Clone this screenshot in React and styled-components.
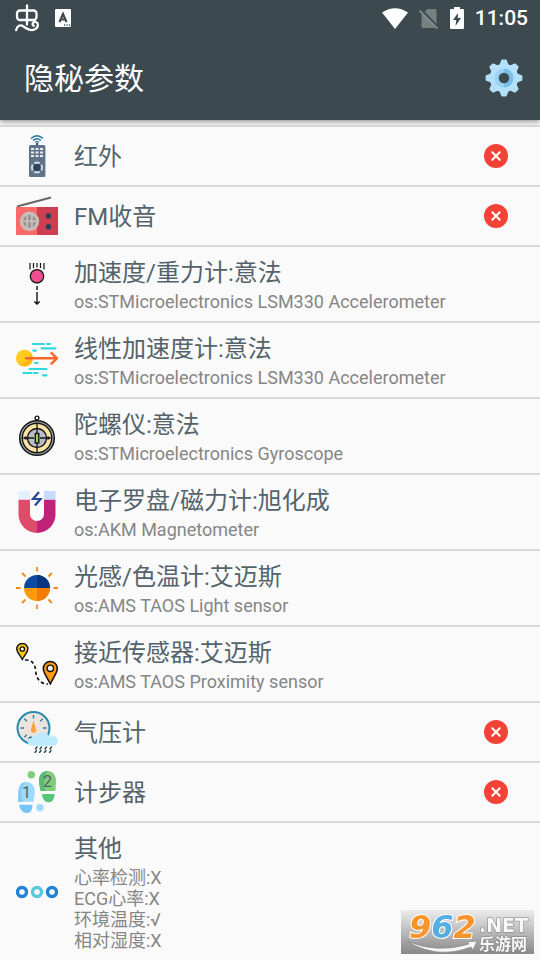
import React from "react";
import styled, { createGlobalStyle } from "styled-components";

const GlobalStyle = createGlobalStyle`
  * {
    box-sizing: border-box;
  }

  body {
    margin: 0;
    background-color: #fafafa;
    font-family: Roboto, "Noto Sans CJK SC", sans-serif;
  }
`;

const Header = styled.header`
  position: relative;
  background-color: #3c4a50;
  color: white;
  box-shadow: 0 2px 5px rgba(0, 0, 0, 0.4);
`;

const StatusBar = styled.div`
  display: flex;
  justify-content: space-between;
  align-items: center;
  height: 36px;
  padding: 0 12px 0 14px;
`;

const StatusGroup = styled.div`
  display: flex;
  align-items: center;
  gap: ${({ $gap }) => $gap}px;
`;

const Clock = styled.time`
  font-size: 21px;
  line-height: 24px;
  font-weight: 500;
`;

const Toolbar = styled.div`
  display: flex;
  justify-content: space-between;
  align-items: center;
  height: 84px;
  padding: 0 16px 0 24px;
`;

const PageTitle = styled.h1`
  margin: 0;
  padding-top: 2px;
  font-size: 30px;
  line-height: 40px;
  font-weight: 400;
`;

const SettingsButton = styled.button`
  display: flex;
  padding: 0;
  border: 0;
  background: none;
  cursor: pointer;
`;

const SensorList = styled.ul`
  margin: 5px 0 0;
  padding: 0;
  list-style: none;
  border-top: 2px solid #dadada;
`;

const SensorRow = styled.li`
  display: flex;
  align-items: center;
  gap: 16px;
  min-height: 60px;
  padding: 0 32px 0 16px;
  border-bottom: 2px solid #dadada;

  &:last-child {
    border-bottom: 0;
  }
`;

const SensorText = styled.div`
  flex: 1;
  padding: ${({ $single }) => ($single ? "2px 0 0" : "8px 0 9px")};
`;

const SensorName = styled.div`
  font-size: 24px;
  line-height: 36px;
  color: #53636b;
`;

const SensorDetail = styled.div`
  font-size: 18px;
  line-height: 21px;
  color: #868686;
`;

const Watermark = styled.div`
  position: fixed;
  right: 6px;
  bottom: 6px;
  display: flex;
`;

function Icon({ children, size = 42 }) {
  return (
    <svg width={size} height={size} viewBox="0 0 42 42" fill="none" aria-hidden="true">
      {children}
    </svg>
  );
}

function RemoteIcon() {
  return (
    <Icon>
      <path d="M15 3.500Q21 -2 27 3.500M17 5.500Q21 2 25 5.500M19 7.300Q21 5.800 23 7.300" stroke="#24779d" strokeWidth="1.300" />
      <path d="M21 8v3" stroke="#34495e" strokeWidth="2" />
      <rect x="13" y="10" width="16.400" height="32" rx="1.500" fill="#5f7489" />
      {[13, 16.5, 20].map((y) => (
        <path key={y} d={`M15 ${y + 1}h3M19.500 ${y + 1}h3M24 ${y + 1}h3`} stroke="#e8edf2" strokeWidth="2" />
      ))}
      <circle cx="21" cy="32.500" r="4.800" stroke="#cfd9e2" strokeWidth="2.600" />
      <path d="M16 27.500l10 10M26 27.500l-10 10" stroke="#5f7489" strokeWidth="1.800" />
      <circle cx="21" cy="32.500" r="3.800" fill="#2f455b" />
    </Icon>
  );
}

function RadioIcon() {
  return (
    <Icon>
      <path d="M1 11.500L35 2.500" stroke="#6d6668" strokeWidth="2" />
      <path d="M0 12h21v28H0z" fill="#fb6a69" />
      <path d="M21 12h21v28H21z" fill="#cd3e50" />
      <circle cx="13.500" cy="26.300" r="9.700" fill="#c9bdb8" />
      <circle cx="13.500" cy="26.300" r="6.500" fill="#968e8c" />
      <path d="M5 26.300h17M11.200 18v17M15.800 18v17" stroke="#c9bdb8" strokeWidth="2" />
      <circle cx="32.500" cy="21" r="2.700" fill="#22405d" />
      <circle cx="32.500" cy="31.700" r="2.700" fill="#22405d" />
    </Icon>
  );
}

function GravityIcon() {
  return (
    <Icon>
      <path d="M14 0v6.500M17.500 0v5M21 0v4.500M24.500 0v5M28 0v6.500" stroke="#111" strokeWidth="1.200" />
      <circle cx="21" cy="13.300" r="6.700" fill="#ef4f91" stroke="#151515" strokeWidth="1.300" />
      <path d="M21 23v4M21 29v12M18.300 38.500L21 41l2.700-2.500" stroke="#111" strokeWidth="1.400" />
    </Icon>
  );
}

function LinearIcon() {
  return (
    <Icon>
      <path
        d="M17 5h11M31 5h3M25.500 9.300h14M17.300 11.700h2.500M19 24h2.500M13.500 30h17M7.500 34h8M18 34h3.500M27 36.300h3.500"
        stroke="#2fd9df"
        strokeWidth="2.200"
        strokeLinecap="round"
      />
      <circle cx="8.500" cy="19.300" r="8.500" fill="#ffca1f" />
      <path d="M15 13.700A8.500 8.500 0 0 1 3 25.500Q12 25 15 13.700z" fill="#ffb414" />
      <path d="M10 19.300h31M35.500 14l5.500 5.300-5.500 5.300" stroke="#fa6529" strokeWidth="2.400" strokeLinecap="round" strokeLinejoin="round" />
    </Icon>
  );
}

function GyroIcon() {
  return (
    <Icon>
      <circle cx="21" cy="3" r="1.900" fill="#fff" stroke="#161616" strokeWidth="1.400" />
      <circle cx="21" cy="23" r="17.300" fill="#a9abb0" stroke="#161616" strokeWidth="1.500" />
      <circle cx="21" cy="23" r="14.700" fill="#fbe3a3" stroke="#161616" strokeWidth="1.400" />
      <circle cx="21" cy="23" r="9.500" fill="#b9bec9" stroke="#161616" strokeWidth="1.400" />
      <path d="M21 8.500V18M21 28v9.500M9 23h9M24 23h9" stroke="#161616" strokeWidth="1.300" />
      <path d="M6.500 23l4-2v4zM35.500 23l-4-2v4z" fill="#161616" />
      <rect x="19.300" y="18.500" width="3.500" height="9.500" fill="#91d63e" stroke="#161616" strokeWidth="1.400" />
    </Icon>
  );
}

function MagnetIcon() {
  return (
    <Icon>
      <path d="M2.500 8.500H14V23a7 7 0 0 0 7 7v12A18.500 18.500 0 0 1 2.500 23.500z" fill="#df4b6b" />
      <path d="M39.500 8.500H28V23a7 7 0 0 1-7 7v12a18.500 18.500 0 0 0 18.500-18.500z" fill="#c22179" />
      <path d="M2.500 0H14v8.500H2.500z" fill="#e3f0ff" />
      <path d="M28 0h11.500v8.500H28z" fill="#c5dcff" />
      <path d="M23 1l-6 7h7.500L19 14.500" stroke="#27469b" strokeWidth="2.200" />
    </Icon>
  );
}

function LightIcon() {
  return (
    <Icon>
      <path
        d="M21 0v4.500M21 37.500V42M0 21h4.500M37.500 21H42M6 6l3.500 3.500M32.500 32.500L36 36M36 6l-3.500 3.500M9.500 32.500L6 36"
        stroke="#f58a1f"
        strokeWidth="1.800"
      />
      <path d="M8 21a13 13 0 0 1 26 0z" fill="#0c4aa4" />
      <path d="M21 8a13 13 0 0 1 13 13H21z" fill="#07377f" />
      <path d="M8 21a13 13 0 0 0 26 0z" fill="#ff9a0c" />
      <path d="M21 21h13a13 13 0 0 1-13 13z" fill="#f27c05" />
    </Icon>
  );
}

function ProximityIcon() {
  return (
    <Icon>
      <path d="M9 17c6-.5 10 3 10.500 10S23 41 32 41" stroke="#111" strokeWidth="1.600" strokeDasharray="3.500 2.500" />
      <path d="M6.300 16.500C4 12 .8 9.500.8 6a5.500 5.500 0 0 1 11 0c0 3.500-3.200 6-5.500 10.500z" fill="#fdc51b" stroke="#111" strokeWidth="1.400" />
      <circle cx="6.300" cy="6" r="2.200" fill="#fff" stroke="#111" strokeWidth="1.300" />
      <path d="M34.300 41C31 34 27.300 30 27.300 25.500a7 7 0 0 1 14 0c0 4.500-3.700 8.500-7 15.500z" fill="#ff9a16" stroke="#111" strokeWidth="1.500" />
      <circle cx="34.300" cy="25.300" r="3.200" fill="#fff" stroke="#111" strokeWidth="1.400" />
    </Icon>
  );
}

function BarometerIcon() {
  return (
    <Icon>
      <circle cx="17.500" cy="17" r="16" fill="#ece2de" stroke="#268aac" strokeWidth="2" />
      <path
        d="M17.500 4v3.500M4.500 17H8M27 17h3.500M8.300 7.800l2.500 2.500M26.700 7.800l-2.500 2.500M8.300 26.200l2.500-2.500"
        stroke="#2b7f9c"
        strokeWidth="1.400"
      />
      <path d="M17.500 9.500l2.600 9a2.700 2.700 0 1 1-5.200 0z" fill="#f9a441" />
      <path d="M12 28c1-3 3-3 5-2l-2 4z" fill="#24515f" />
      <path d="M16 34.700a4 4 0 0 1-.5-8 5 5 0 0 1 5-2 7.500 7.500 0 0 1 13 1.300A5 5 0 0 1 41.500 31a3.700 3.700 0 0 1-4 3.700z" fill="#bcebfd" />
      <path
        d="M21 36l-1.500 2M25.500 36L24 38M30.500 36L29 38M35.500 36L34 38M20.500 39.500L19 41.500M25 39.500l-1.500 2M30 39.500l-1.500 2M35 39.500l-1.500 2"
        stroke="#24424e"
        strokeWidth="1.300"
        strokeLinecap="round"
      />
    </Icon>
  );
}

const StepDigit = styled.text`
  font-family: Roboto, sans-serif;
  font-size: 16px;
  fill: #53616b;
`;

function StepsIcon() {
  return (
    <Icon>
      <path d="M2 30.700c0-4 .5-5.500.5-10C2.500 15 5.500 11 10.500 11s8.300 4 8.300 9.500c0 4.500-1 6-1.300 10.200z" fill="#9fd9fb" />
      <path d="M6 28c-2-8 0-14 4.500-17-5 0-8 4-8 9.700C2.500 25 2 27 2 30.700h5z" fill="#82cafa" />
      <path d="M3 33.700h13.500c0 5-2 8.300-6 8.300S3.500 38 3 33.700z" fill="#74c6f6" />
      <circle cx="24" cy="36.700" r="3.700" fill="#9fd9fb" />
      <circle cx="15.300" cy="3.800" r="3.700" fill="#82cd7b" />
      <path d="M24.500 20C24 15 23 14 23 9.500 23 4 26.500 0 31.500 0S40 4 40 9.500c0 4.500-.5 6-.5 10.500z" fill="#82cd7b" />
      <path d="M29 20c-2-8-1-15 2.500-20C26.500 0 23 4 23 9.500c0 4.500 1 5.500 1.500 10.500z" fill="#58bb78" />
      <path d="M26 23h12.500c0 5-2 8.300-6 8.300S26.500 28 26 23z" fill="#58c47c" />
      <StepDigit x="6" y="26.500">1</StepDigit>
      <StepDigit x="27" y="16">2</StepDigit>
    </Icon>
  );
}

function OtherIcon() {
  return (
    <Icon>
      <circle cx="6" cy="21" r="4.500" stroke="#2183d4" strokeWidth="3.400" />
      <circle cx="21" cy="21" r="4.500" stroke="#5bc9d9" strokeWidth="3.400" />
      <circle cx="36" cy="21" r="4.500" stroke="#2183d4" strokeWidth="3.400" />
    </Icon>
  );
}

function MissingIcon() {
  return (
    <svg width="24" height="24" viewBox="0 0 24 24" role="img" aria-label="X">
      <circle cx="12" cy="12" r="12" fill="#f44336" />
      <path d="M8.300 8.300l7.400 7.400M15.700 8.300l-7.400 7.400" stroke="white" strokeWidth="2" strokeLinecap="round" />
    </svg>
  );
}

function GearIcon() {
  return (
    <Icon size={40}>
      <g fill="#b5e0fa">
        <circle cx="21" cy="21" r="15" />
        {[0, 45, 90, 135, 180, 225, 270, 315].map((angle) => (
          <path key={angle} d="M15.500 9L18 2.500Q18.200 1.700 19 1.700h4q.8 0 1 .8L26.500 9z" transform={`rotate(${angle} 21 21)`} />
        ))}
      </g>
      <path d="M21 11a10 10 0 0 0 0 20z" fill="#9bd1f3" />
      <path d="M21 11a10 10 0 0 1 0 20z" fill="#78bfe9" />
      <circle cx="21" cy="21" r="5.500" fill="#3c4a50" />
    </Icon>
  );
}

function BugIcon() {
  return (
    <svg width="26" height="28" viewBox="0 0 26 28" fill="none" stroke="white" strokeWidth="2.300" strokeLinecap="round" aria-hidden="true">
      <rect x="3" y="6.500" width="19.500" height="9.500" rx="3" />
      <path d="M13 1.500v19" />
      <path d="M2.200 26c.8-4 4-6 7.300-3.500 3.500 2.500 8 4.500 11 3 3.800-1.500 4.500-6 1.500-7.500-3-1-4.500 2.500-2.300 3.800" />
    </svg>
  );
}

function InputIcon() {
  return (
    <svg width="16" height="18" viewBox="0 0 16 18" fill="none" aria-hidden="true">
      <rect width="16" height="18" rx="1" fill="white" />
      <path d="M4.500 13L8 5l3.500 8M5.700 10.500h4.600" stroke="#3c4a50" strokeWidth="2.200" />
      <path d="M9 16h1.200M11.500 16h1.200M14 16h1.200" stroke="#3c4a50" strokeWidth="1.300" />
    </svg>
  );
}

function WifiIcon() {
  return (
    <svg width="26" height="21" viewBox="0 0 26 21" aria-hidden="true">
      <path d="M13 21L0 4.500Q13 -4 26 4.500z" fill="white" />
    </svg>
  );
}

function NoSimIcon() {
  return (
    <svg width="20" height="22" viewBox="0 0 20 22" aria-hidden="true">
      <path d="M8.500 2H16q1.500 0 1.500 1.500v16q0 1.500-1.500 1.500H4q-1.500 0-1.500-1.500V8z" fill="#75807f" />
      <path d="M1.300 2.300l18 19" stroke="#3c4a50" strokeWidth="3" />
      <path d="M.5 3.500l18 18" stroke="#879094" strokeWidth="1.700" />
    </svg>
  );
}

function BatteryIcon() {
  return (
    <svg width="14" height="22" viewBox="0 0 14 22" aria-hidden="true">
      <path d="M4 0h6v2h3q1 0 1 1v18q0 1-1 1H1q-1 0-1-1V3q0-1 1-1h3z" fill="white" />
      <path d="M8 6l-5 7h3.300L5.500 19l5.500-8H7.800z" fill="#3c4a50" />
    </svg>
  );
}

const LogoCanvas = styled.svg`
  overflow: visible;
`;

const LogoNumber = styled.text`
  font-family: "DejaVu Sans", sans-serif;
  font-size: 32px;
  font-weight: 700;
  font-style: italic;
  stroke: white;
  stroke-width: 2px;
  paint-order: stroke;
`;

const LogoText = styled.text`
  font-family: ${({ $cjk }) => ($cjk ? '"Noto Sans CJK SC"' : '"DejaVu Sans"')}, sans-serif;
  font-size: ${({ $cjk }) => ($cjk ? 16 : 19)}px;
  font-weight: 700;
  fill: #f8f8f8;
  stroke: #808080;
  stroke-width: 1px;
  paint-order: stroke;
`;

function SiteLogo() {
  return (
    <LogoCanvas width="133" height="44" viewBox="0 0 133 44">
      <defs>
        <linearGradient id="plate" x1="0" y1="0" x2="0" y2="1">
          <stop offset="0" stopColor="#ececec" />
          <stop offset="1" stopColor="#888888" />
        </linearGradient>
      </defs>
      <rect width="133" height="44" fill="url(#plate)" />
      <path d="M6 31Q36 44 68 34l-2-2 10-1-4 9-2-3Q36 50 6 31z" fill="#f6f6f6" stroke="#888" strokeWidth=".7" />
      <LogoNumber x="8" y="28">
        <tspan fill="#f7942b">9</tspan>
        <tspan fill="#55aee3">6</tspan>
        <tspan fill="#f7942b">2</tspan>
      </LogoNumber>
      <LogoText x="78" y="22">.NET</LogoText>
      <LogoText $cjk x="78" y="40">乐游网</LogoText>
    </LogoCanvas>
  );
}

const sensors = [
  { name: "红外", icon: RemoteIcon, missing: true },
  { name: "FM收音", icon: RadioIcon, missing: true },
  { name: "加速度/重力计:意法", icon: GravityIcon, details: ["os:STMicroelectronics LSM330 Accelerometer"] },
  { name: "线性加速度计:意法", icon: LinearIcon, details: ["os:STMicroelectronics LSM330 Accelerometer"] },
  { name: "陀螺仪:意法", icon: GyroIcon, details: ["os:STMicroelectronics Gyroscope"] },
  { name: "电子罗盘/磁力计:旭化成", icon: MagnetIcon, details: ["os:AKM Magnetometer"] },
  { name: "光感/色温计:艾迈斯", icon: LightIcon, details: ["os:AMS TAOS Light sensor"] },
  { name: "接近传感器:艾迈斯", icon: ProximityIcon, details: ["os:AMS TAOS Proximity sensor"] },
  { name: "气压计", icon: BarometerIcon, missing: true },
  { name: "计步器", icon: StepsIcon, missing: true },
  { name: "其他", icon: OtherIcon, details: ["心率检测:X", "ECG心率:X", "环境温度:√", "相对湿度:X"] },
];

function Sensor({ name, icon: SensorIcon, details = [], missing }) {
  return (
    <SensorRow>
      <SensorIcon />
      <SensorText $single={details.length === 0}>
        <SensorName>{name}</SensorName>
        {details.map((detail) => (
          <SensorDetail key={detail}>{detail}</SensorDetail>
        ))}
      </SensorText>
      {missing && <MissingIcon />}
    </SensorRow>
  );
}

function App() {
  return (
    <>
      <GlobalStyle />
      <Header>
        <StatusBar>
          <StatusGroup $gap={15}>
            <BugIcon />
            <InputIcon />
          </StatusGroup>
          <StatusGroup $gap={11}>
            <WifiIcon />
            <NoSimIcon />
            <BatteryIcon />
            <Clock>11:05</Clock>
          </StatusGroup>
        </StatusBar>
        <Toolbar>
          <PageTitle>隐秘参数</PageTitle>
          <SettingsButton type="button" aria-label="设置">
            <GearIcon />
          </SettingsButton>
        </Toolbar>
      </Header>
      <main>
        <SensorList>
          {sensors.map((sensor) => (
            <Sensor key={sensor.name} {...sensor} />
          ))}
        </SensorList>
      </main>
      <Watermark>
        <SiteLogo />
      </Watermark>
    </>
  );
}

export default App;
